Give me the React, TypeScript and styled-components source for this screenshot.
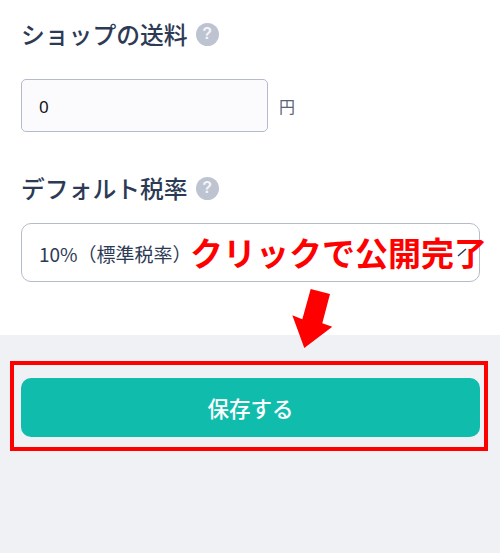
import styled, { createGlobalStyle } from "styled-components";

const GlobalStyle = createGlobalStyle`
  html, body {
    margin: 0;
    padding: 0;
    background: #ffffff;
  }
  body {
    font-family: "Noto Sans CJK JP", "Noto Sans", sans-serif;
  }
`;

export default function App() {
  return (
    <Page>
      <GlobalStyle />
      <Form>
        <Label>
          ショップの送料 <HelpIcon />
        </Label>
        <FeeRow>
          <FeeInput>0</FeeInput>
          <Unit>円</Unit>
        </FeeRow>

        <TaxLabel>
          デフォルト税率 <HelpIcon />
        </TaxLabel>
        <TaxSelect>
          10%（標準税率）
          <Chevron viewBox="0 0 10 10">
            <path d="M1 9 L9 2" fill="none" stroke="#2d3a55" strokeWidth="1.4" />
          </Chevron>
        </TaxSelect>
      </Form>

      <Footer>
        <SaveButton>保存する</SaveButton>
        <Highlight />
      </Footer>

      <Callout>クリックで公開完了</Callout>
      <Arrow viewBox="0 0 50 70">
        <polygon points="20.7,0 40,5 32.3,34.3 42.3,37.7 14.3,59 2.3,26.3 12.3,30.3" fill="#ff0000" />
      </Arrow>
    </Page>
  );
}

function HelpIcon() {
  return (
    <HelpBadge>
      <span>?</span>
    </HelpBadge>
  );
}

const Page = styled.div`
  position: relative;
  width: 500px;
  height: 553px;
  overflow: hidden;
  display: flex;
  flex-direction: column;
`;

const Form = styled.div`
  height: 335px;
  box-sizing: border-box;
  padding: 18px 20px 0 21px;
`;

const Label = styled.div`
  display: flex;
  align-items: center;
  gap: 8px;
  height: 32px;
  font-size: 23.8px;
  font-weight: 500;
  color: #2d3a55;
  line-height: 32px;
  white-space: nowrap;
`;

const TaxLabel = styled(Label)`
  margin-top: 40px;
`;

const HelpBadge = styled.span`
  display: inline-flex;
  align-items: center;
  justify-content: center;
  width: 23px;
  height: 23px;
  border-radius: 50%;
  background: #bdc3d0;
  color: #f4f5f8;
  font-family: "Liberation Sans", sans-serif;
  font-size: 16px;
  font-weight: 700;
  line-height: 1;
`;

const FeeRow = styled.div`
  display: flex;
  align-items: center;
  gap: 11px;
  margin-top: 29px;
`;

const FeeInput = styled.div`
  box-sizing: border-box;
  width: 247px;
  height: 53px;
  padding: 2px 0 0 17px;
  display: flex;
  align-items: center;
  border: 1.5px solid #b4bcca;
  border-radius: 5px;
  background: #fbfbfe;
  color: #111111;
  font-family: "Noto Sans", sans-serif;
  font-size: 17px;
`;

const Unit = styled.span`
  font-size: 16px;
  color: #5a6478;
`;

const TaxSelect = styled.div`
  position: relative;
  box-sizing: border-box;
  width: 459px;
  height: 59px;
  margin-top: 19px;
  padding: 2px 0 0 17px;
  display: flex;
  align-items: center;
  border: 1.5px solid #b4bcca;
  border-radius: 10px;
  background: #ffffff;
  color: #2d3a55;
  font-size: 19px;
  font-weight: 400;
`;

const Chevron = styled.svg`
  position: absolute;
  right: 12px;
  top: 23px;
  width: 10px;
  height: 10px;
`;

const Footer = styled.div`
  position: relative;
  flex: 1;
  background: #f0f1f5;
  padding: 43px 20px 0 21px;
`;

const SaveButton = styled.div`
  height: 59px;
  display: flex;
  align-items: center;
  justify-content: center;
  border-radius: 10px;
  background: #10bdac;
  color: #ffffff;
  font-size: 21.5px;
  font-weight: 500;
`;

const Highlight = styled.div`
  position: absolute;
  left: 10px;
  top: 26px;
  width: 478px;
  height: 90px;
  box-sizing: border-box;
  border: 4px solid #ff0000;
`;

const Callout = styled.div`
  position: absolute;
  left: 190px;
  top: 232px;
  color: #ff0000;
  font-size: 33px;
  font-weight: 700;
  line-height: 40px;
  white-space: nowrap;
`;

const Arrow = styled.svg`
  position: absolute;
  left: 290px;
  top: 289px;
  width: 50px;
  height: 70px;
`;
